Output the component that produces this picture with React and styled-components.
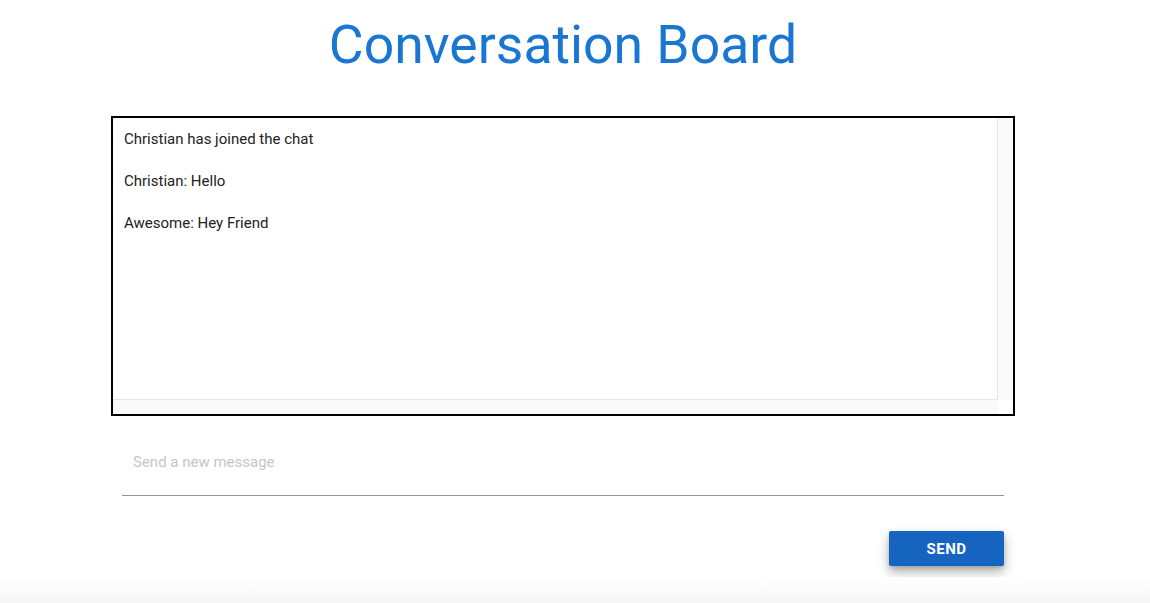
import React, { useState } from 'react'
import styled, { createGlobalStyle } from 'styled-components'

const Global = createGlobalStyle`
  body {
    margin: 0;
    background: #fff;
    font-family: Roboto, "Liberation Sans", sans-serif;
  }
`

const Page = styled.div`
  min-height: 603px;
  display: flex;
  flex-direction: column;
`

const Main = styled.main`
  width: 904px;
  margin-left: 111px;
  display: flex;
  flex-direction: column;
`

const Title = styled.h1`
  margin: 10px 0 36px;
  text-align: center;
  font-size: 53.5px;
  line-height: 70px;
  font-weight: 400;
  color: #1976d2;
`

const Board = styled.div`
  height: 296px;
  border: 2px solid #000;
  display: grid;
  grid-template-columns: 1fr 15px;
  grid-template-rows: 1fr 14px;
`

const Messages = styled.div`
  border-right: 1px solid #e6e6e6;
  border-bottom: 1px solid #e6e6e6;
  padding: 0 11px;
  overflow: hidden;
`

const Track = styled.div`
  background: ${p => (p.corner ? '#fff' : '#fafafa')};
`

const Message = styled.p`
  margin: 0;
  font-size: 15px;
  line-height: 42px;
  color: #222;
`

const Field = styled.div`
  margin: 30px 11px 0;
  border-bottom: 1px solid #949494;
`

const Input = styled.input`
  width: 100%;
  box-sizing: border-box;
  border: none;
  outline: none;
  background: transparent;
  padding: 7px 11px 24px;
  font-family: inherit;
  font-size: 15px;
  color: #222;
  &::placeholder {
    color: #c6c6c6;
  }
`

const Actions = styled.div`
  display: flex;
  justify-content: flex-end;
  padding: 35px 11px 0;
`

const SendButton = styled.button`
  width: 115px;
  height: 35px;
  border: none;
  border-radius: 2px;
  background: #1565c0;
  color: #fff;
  font-family: inherit;
  font-size: 15px;
  font-weight: 700;
  letter-spacing: 0.5px;
  box-shadow: 0 6px 12px rgba(0, 0, 0, 0.3), 0 2px 4px rgba(0, 0, 0, 0.15);
  cursor: pointer;
`

const Footer = styled.div`
  margin-top: auto;
  height: 26px;
  background: linear-gradient(to bottom, #fff, #f6f6f6);
`

const messages = [
  'Christian has joined the chat',
  'Christian: Hello',
  'Awesome: Hey Friend',
]

export default function App() {
  const [text, setText] = useState('')
  return (
    <Page>
      <Global />
      <Main>
        <Title>Conversation Board</Title>
        <Board>
          <Messages>
            {messages.map((m, i) => (
              <Message key={i}>{m}</Message>
            ))}
          </Messages>
          <Track />
          <Track />
          <Track corner />
        </Board>
        <Field>
          <Input
            value={text}
            onChange={e => setText(e.target.value)}
            placeholder="Send a new message"
          />
        </Field>
        <Actions>
          <SendButton>SEND</SendButton>
        </Actions>
      </Main>
      <Footer />
    </Page>
  )
}
